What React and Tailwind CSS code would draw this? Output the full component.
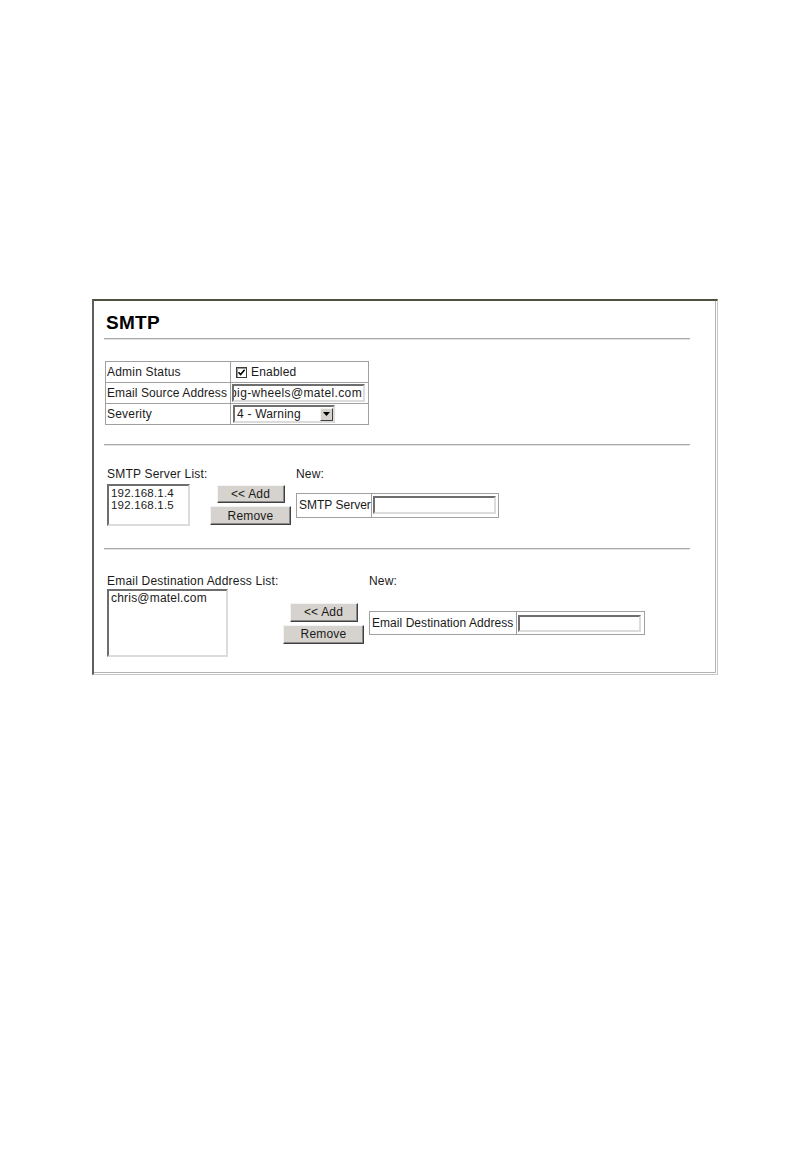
import React from "react";

const font = { fontFamily: '"Liberation Sans", Arial, sans-serif' };

function Btn({ children, w, h }) {
  return (
    <div
      className={`${w} ${h} flex items-center justify-center bg-[#d6d3ce] border border-t-[#f4f4f4] border-l-[#f4f4f4] border-r-[#404040] border-b-[#404040] shadow-[inset_-1px_-1px_0_#8a8a8a] text-[12px] leading-[14px] text-[#1a1a1a]`}
    >
      {children}
    </div>
  );
}

function Inset({ className, children }) {
  return (
    <div
      className={`border-2 border-t-[#6e6e6e] border-l-[#6e6e6e] border-r-[#dcdcdc] border-b-[#dcdcdc] bg-white overflow-hidden ${className}`}
    >
      {children}
    </div>
  );
}

function Hr() {
  return (
    <div className="-ml-px w-[586px] h-[2px] border-t border-t-[#a9a9a9] border-b border-b-[#e3e3e3]" />
  );
}

export default function App() {
  return (
    <div className="min-h-[1152px] w-[792px] bg-white pt-[299px] pl-[92px] text-[#1a1a1a] tracking-[0.2px]" style={font}>
      <div className="w-[626px] h-[376px] border-t-2 border-l-2 border-t-[#4f523f] border-l-[#5f5f5f] border-r border-b border-r-[#c6c6c6] border-b-[#c6c6c6] pr-px pb-px">
        <div className="h-full border-r border-b border-r-[#b4b4b4] border-b-[#b4b4b4] pl-[11px] pt-[11px]">
          <div className="ml-px text-[19px] leading-[22px] font-bold text-black tracking-[0.3px]">SMTP</div>
          <div className="mt-[4px]">
            <Hr />
          </div>

          {/* Settings table */}
          <div className="mt-[21px] inline-flex flex-col border border-[#a0a0a0] text-[12px] leading-[14px]">
            <div className="flex h-[20px]">
              <div className="w-[125px] border-r border-[#a0a0a0] pl-[1px] flex items-center">Admin Status</div>
              <div className="w-[137px] pl-[5px] flex items-center">
                <div className="w-[11px] h-[11px] border border-[#3c3c3c] bg-white flex items-center justify-center shadow-[inset_1px_1px_0_#9a9a9a]">
                  <svg width="9" height="9" viewBox="0 0 9 9">
                    <polyline points="1.5,4.2 3.6,6.5 7.6,1.8" fill="none" stroke="#000" strokeWidth="1.6" />
                  </svg>
                </div>
                <span className="ml-[4px]">Enabled</span>
              </div>
            </div>
            <div className="flex h-[21px] border-t border-[#a0a0a0]">
              <div className="w-[125px] border-r border-[#a0a0a0] pl-[1px] flex items-center whitespace-nowrap tracking-[0.1px]">Email Source Address</div>
              <div className="w-[137px] pl-[1px] flex items-center">
                <Inset className="w-[133px] h-[18px] flex items-center justify-end pr-[1px]">
                  <span className="whitespace-nowrap tracking-[0.35px]">pig-wheels@matel.com</span>
                </Inset>
              </div>
            </div>
            <div className="flex h-[21px] border-t border-[#a0a0a0]">
              <div className="w-[125px] border-r border-[#a0a0a0] pl-[1px] flex items-center">Severity</div>
              <div className="w-[137px] pl-[2px] flex items-center">
                <Inset className="w-[102px] h-[18px] flex items-center justify-between pl-[2px] pr-0">
                  <span className="whitespace-nowrap">4 - Warning</span>
                  <div className="w-[13px] h-[13px] bg-[#d6d3ce] border border-t-[#f4f4f4] border-l-[#f4f4f4] border-r-[#404040] border-b-[#404040] flex items-center justify-center">
                    <svg width="7" height="4" viewBox="0 0 7 4">
                      <polygon points="0,0 7,0 3.5,4" fill="#000" />
                    </svg>
                  </div>
                </Inset>
              </div>
            </div>
          </div>

          {/* SMTP server list */}
          <div className="mt-[19px]">
            <Hr />
          </div>
          <div className="mt-[21px] ml-[2px] flex text-[12px] leading-[14px]">
            <div className="w-[189px]">SMTP Server List:</div>
            <div>New:</div>
          </div>
          <div className="mt-[3px] ml-[2px] flex items-center text-[12px]">
            <Inset className="w-[83px] h-[42px] pl-[2px] pt-[1px] text-[11.5px] leading-[12px]">
              <div>192.168.1.4</div>
              <div>192.168.1.5</div>
            </Inset>
            <div className="ml-[20px] w-[81px] flex flex-col items-center gap-[3px]">
              <Btn w="w-[68px]" h="h-[18px]">&lt;&lt; Add</Btn>
              <Btn w="w-[81px]" h="h-[19px]">Remove</Btn>
            </div>
            <div className="ml-[5px] flex border border-[#a0a0a0] h-[25px]">
              <div className="w-[75px] border-r border-[#a0a0a0] pl-[2px] flex items-center leading-[14px] whitespace-nowrap tracking-[0px]">SMTP Server</div>
              <div className="w-[126px] pl-[1px] flex items-center">
                <Inset className="w-[123px] h-[18px]" />
              </div>
            </div>
          </div>

          {/* Email destination list */}
          <div className="mt-[22px]">
            <Hr />
          </div>
          <div className="mt-[24px] ml-[2px] flex text-[12px] leading-[14px]">
            <div className="w-[262px]">Email Destination Address List:</div>
            <div>New:</div>
          </div>
          <div className="mt-[1px] ml-[2px] flex items-center text-[12px]">
            <Inset className="w-[121px] h-[68px] pl-[2px] text-[12px] leading-[14px]">
              <div>chris@matel.com</div>
            </Inset>
            <div className="ml-[55px] w-[81px] flex flex-col items-center gap-[3px]">
              <Btn w="w-[68px]" h="h-[19px]">&lt;&lt; Add</Btn>
              <Btn w="w-[81px]" h="h-[19px]">Remove</Btn>
            </div>
            <div className="ml-[5px] flex border border-[#a0a0a0] h-[24px]">
              <div className="w-[147px] border-r border-[#a0a0a0] pl-[2px] flex items-center leading-[14px] whitespace-nowrap tracking-[0.05px]">Email Destination Address</div>
              <div className="w-[127px] pl-[1px] flex items-center">
                <Inset className="w-[123px] h-[17px]" />
              </div>
            </div>
          </div>
        </div>
      </div>
    </div>
  );
}
